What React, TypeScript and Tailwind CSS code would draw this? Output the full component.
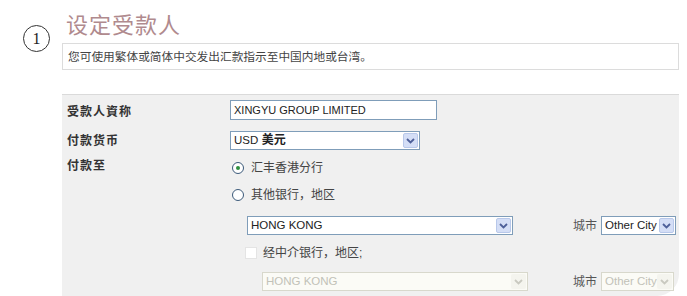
import React from "react";

const FONT = { fontFamily: '"Liberation Sans", "Noto Sans CJK SC", sans-serif' };

function Arrow({ disabled = false }: { disabled?: boolean }) {
  return (
    <span
      className={
        disabled
          ? "flex h-[15px] w-[15px] shrink-0 items-center justify-center rounded-[2px] bg-[#f4f4ee]"
          : "flex h-[15px] w-[15px] shrink-0 items-center justify-center rounded-[2px] border border-[#b8c8ea] bg-[#d4def6]"
      }
    >
      <svg width="9" height="6" viewBox="0 0 9 6">
        <path
          d="M1 1 L4.5 4.5 L8 1"
          fill="none"
          stroke={disabled ? "#c9c9c0" : "#4d5f99"}
          strokeWidth="1.8"
        />
      </svg>
    </span>
  );
}

function Select({
  value,
  width,
  disabled = false,
  bold,
}: {
  value: string;
  width: string;
  disabled?: boolean;
  bold?: string;
}) {
  return (
    <div
      className={
        (disabled
          ? "border-[#d8d8cc] bg-[#fbfbf6] text-[#c2c2b8] "
          : "border-[#7f9db9] bg-white text-[#222] ") +
        "flex h-[19px] items-center justify-between overflow-hidden whitespace-nowrap border pl-[3px] pr-[1px] text-[11.5px] " +
        width
      }
    >
      <span className="overflow-hidden">
        {value}
        {bold && <span className="text-[12px] font-bold"> {bold}</span>}
      </span>
      <Arrow disabled={disabled} />
    </div>
  );
}

function Radio({ checked, label }: { checked?: boolean; label: string }) {
  return (
    <div className="flex items-center gap-[7px] text-[12px] text-[#444]">
      <span className="flex h-[12px] w-[12px] items-center justify-center rounded-full border border-[#3c5a7a] bg-white">
        {checked && <span className="h-[4px] w-[4px] rounded-full bg-[#2f8f3f]" />}
      </span>
      {label}
    </div>
  );
}

export default function App() {
  return (
    <div className="flex h-[296px] w-[687px] flex-col overflow-hidden bg-white" style={FONT}>
      <div className="flex h-[38px] items-start">
        <span
          className="ml-[23px] mt-[25px] flex h-[27px] w-[27px] shrink-0 items-center justify-center rounded-full border border-[#333] text-[16px] text-[#222]"
          style={{ fontFamily: '"Liberation Serif", serif' }}
        >
          1
        </span>
        <h1 className="ml-[16px] mt-[13px] text-[22px] font-normal leading-[26px] tracking-[1px] text-[#b08a8e]">
          设定受款人
        </h1>
      </div>

      <div className="ml-[62px] mt-[5px] flex h-[27px] w-[617px] shrink-0 items-center border border-[#dcdcdc] pl-[5px] text-[11.7px] text-[#444]">
        您可使用繁体或简体中交发出汇款指示至中国内地或台湾。
      </div>

      <div className="ml-[62px] mt-[24px] w-[617px] flex-1 rounded-br-[22px] border-t border-[#dadada] bg-[#f0f0f0] pt-[5px]">
        <div className="grid grid-cols-[168px_1fr] items-start text-[12px]">
          <div className="pl-[5px] pt-[3px] font-bold tracking-[1px] text-[#333]">受款人資称</div>
          <div className="flex h-[20px] w-[207px] items-center border border-[#7f9db9] bg-white pl-[3px] text-[11px] text-[#222]">
            XINGYU GROUP LIMITED
          </div>

          <div className="mt-[10px] pl-[5px] pt-[1px] font-bold tracking-[1px] text-[#333]">付款货币</div>
          <div className="mt-[10px]">
            <Select value="USD" bold="美元" width="w-[190px]" />
          </div>

          <div className="mt-[6px] pl-[5px] pt-[1px] font-bold tracking-[1px] text-[#333]">付款至</div>
          <div className="mt-[9px] flex flex-col">
            <div className="pl-[2px]">
              <Radio checked label="汇丰香港分行" />
            </div>
            <div className="mt-[9px] pl-[2px]">
              <Radio label="其他银行，地区" />
            </div>
          </div>
        </div>

        <div className="mt-[12px] flex items-center pl-[185px] pr-[2px]">
          <Select value="HONG KONG" width="w-[266px]" />
          <span className="ml-[60px] text-[12px] text-[#555]">城市</span>
          <div className="ml-[4px]">
            <Select value="Other City" width="w-[75px]" />
          </div>
        </div>

        <div className="mt-[9px] flex items-center gap-[6px] pl-[183px] text-[12px] text-[#444]">
          <span className="h-[12px] w-[12px] border border-[#e4e4e4] bg-white" />
          经中介银行，地区;
        </div>

        <div className="mt-[10px] flex items-center pl-[200px]">
          <Select value="HONG KONG" width="w-[266px]" disabled />
          <span className="ml-[45px] text-[12px] text-[#555]">城市</span>
          <div className="ml-[4px]">
            <Select value="Other City" width="w-[73px]" disabled />
          </div>
        </div>
      </div>
    </div>
  );
}
